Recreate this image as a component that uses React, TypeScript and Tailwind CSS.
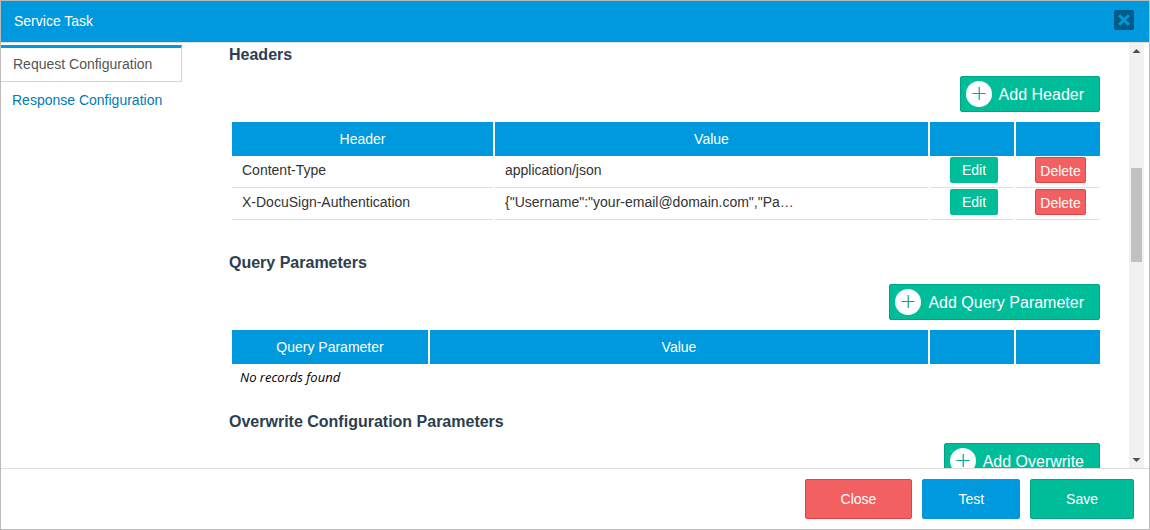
import type { ReactNode } from 'react';

const headers = [
  { name: 'Content-Type', value: 'application/json' },
  {
    name: 'X-DocuSign-Authentication',
    value: '{"Username":"your-email@domain.com","Pa…',
  },
];

function SectionTitle({ children }: { children: ReactNode }) {
  return (
    <h2 className="text-base leading-[22px] font-bold text-[#2c3e50]">{children}</h2>
  );
}

function AddButton({ label }: { label: string }) {
  return (
    <div className="mt-2.5 flex justify-end">
      <button
        type="button"
        className="flex h-9 items-center gap-[7px] rounded-xs border border-[#00a383] bg-[#00bd9a] pr-[15px] pl-[5px] text-base text-white"
      >
        <svg width="26" height="26" viewBox="0 0 26 26" aria-hidden="true">
          <circle cx="13" cy="13" r="13" fill="#fff" />
          <path d="M6.5 12.5h13M13.25 6v13" stroke="#00a88a" strokeWidth="1.2" />
        </svg>
        <span className="pt-0.5">{label}</span>
      </button>
    </div>
  );
}

function HeadCell({ children }: { children?: ReactNode }) {
  return (
    <th className="h-[34px] bg-[#0099de] p-0 text-center font-normal text-white">
      {children}
    </th>
  );
}

export default function App() {
  return (
    <div className="flex h-screen flex-col border border-[#bbb] bg-white font-['Liberation_Sans',Arial,sans-serif] text-sm text-[#333]">
      {/* Title bar */}
      <header className="flex h-[42px] shrink-0 items-center justify-between border-b border-[#dedede] bg-[#0099de] pr-[15px] pb-1 pl-[13px]">
        <h1 className="pt-0.5 text-white">Service Task</h1>
        <button
          type="button"
          aria-label="Close dialog"
          className="flex size-5 items-center justify-center rounded-xs bg-[#005c86]"
        >
          <svg width="12" height="12" viewBox="0 0 12 12" aria-hidden="true">
            <path d="M1.2 1.2l9.6 9.6M10.8 1.2l-9.6 9.6" stroke="#0099de" strokeWidth="2.9" />
          </svg>
        </button>
      </header>

      <div className="flex min-h-0 flex-1">
        {/* Tabs */}
        <nav className="w-[181px] shrink-0 pt-0.5">
          <a
            href="#request"
            className="flex h-[37px] items-center border-t-3 border-r border-b border-t-[#0099de] border-r-[#d5d5d5] border-b-[#d5d5d5] pb-0.5 pl-3 text-[#555]"
          >
            Request Configuration
          </a>
          <a href="#response" className="flex h-9 items-center pl-[11px] text-[#007bb3]">
            Response Configuration
          </a>
        </nav>

        {/* Scrolled content */}
        <main className="min-w-0 flex-1 overflow-hidden pt-px pr-[29px] pl-[47px]">
          <section className="mb-8">
            <SectionTitle>Headers</SectionTitle>
            <AddButton label="Add Header" />
            <div className="mt-2.5 -mr-0.5 ml-px">
              <table className="w-full table-fixed border-separate border-spacing-x-0.5 border-spacing-y-0">
                <colgroup>
                  <col className="w-[261px]" />
                  <col />
                  <col className="w-[84px]" />
                  <col className="w-[84px]" />
                </colgroup>
                <thead>
                  <tr>
                    <HeadCell>Header</HeadCell>
                    <HeadCell>Value</HeadCell>
                    <HeadCell />
                    <HeadCell />
                  </tr>
                </thead>
                <tbody>
                  {headers.map((header) => (
                    <tr key={header.name}>
                      <td className="h-8 border-b border-[#e0e0e0] px-2.5 pt-0 pb-1">
                        {header.name}
                      </td>
                      <td className="h-8 border-b border-[#e0e0e0] px-2.5 pt-0 pb-1">
                        {header.value}
                      </td>
                      <td className="h-8 border-b border-[#e0e0e0] pt-px pl-5 align-top">
                        <button
                          type="button"
                          className="block h-[26px] w-12 rounded-xs bg-[#00bd9a] text-white"
                        >
                          Edit
                        </button>
                      </td>
                      <td className="h-8 border-b border-[#e0e0e0] pt-px pl-[19px] align-top">
                        <button
                          type="button"
                          className="block h-[26px] w-[51px] rounded-xs border border-[#ee3e3e] bg-[#f36062] pt-0.5 text-white"
                        >
                          Delete
                        </button>
                      </td>
                    </tr>
                  ))}
                </tbody>
              </table>
            </div>
          </section>

          <section className="mb-5">
            <SectionTitle>Query Parameters</SectionTitle>
            <AddButton label="Add Query Parameter" />
            <div className="mt-2.5 -mr-0.5 ml-px">
              <table className="w-full table-fixed border-separate border-spacing-x-0.5 border-spacing-y-0">
                <colgroup>
                  <col className="w-[196px]" />
                  <col />
                  <col className="w-[84px]" />
                  <col className="w-[84px]" />
                </colgroup>
                <thead>
                  <tr>
                    <HeadCell>Query Parameter</HeadCell>
                    <HeadCell>Value</HeadCell>
                    <HeadCell />
                    <HeadCell />
                  </tr>
                </thead>
                <tbody>
                  <tr>
                    <td
                      colSpan={4}
                      className="h-[27px] pt-0 pb-0.5 pl-2 font-['Open_Sans',sans-serif] text-[13px] leading-5 text-black italic"
                    >
                      No records found
                    </td>
                  </tr>
                </tbody>
              </table>
            </div>
          </section>

          <section>
            <SectionTitle>Overwrite Configuration Parameters</SectionTitle>
            <AddButton label="Add Overwrite" />
          </section>
        </main>

        {/* Scrollbar */}
        <div className="mr-[5px] flex w-[15px] shrink-0 flex-col items-center bg-[#f1f1f1]">
          <svg width="15" height="16" viewBox="0 0 15 16" className="shrink-0" aria-hidden="true">
            <path d="M3.5 10L7.5 6L11.5 10z" fill="#505050" />
          </svg>
          <div className="flex w-full flex-1 flex-col items-center">
            <div className="basis-[109px]" />
            <div className="h-[94px] w-[11px] bg-[#c1c1c1]" />
          </div>
          <svg width="15" height="16" viewBox="0 0 15 16" className="shrink-0" aria-hidden="true">
            <path d="M3.5 6L7.5 10L11.5 6z" fill="#505050" />
          </svg>
        </div>
      </div>

      {/* Actions */}
      <footer className="flex shrink-0 justify-end gap-2.5 border-t border-[#dedede] py-2.5 pr-[15px]">
        <button
          type="button"
          className="h-10 rounded-xs border border-[#ee3e3e] bg-[#f36062] px-[35px] text-white"
        >
          Close
        </button>
        <button
          type="button"
          className="h-10 rounded-xs border border-[#0099de] bg-[#0099de] px-[35px] text-white"
        >
          Test
        </button>
        <button
          type="button"
          className="h-10 rounded-xs border border-[#00a383] bg-[#00bd9a] px-[35px] text-white"
        >
          Save
        </button>
      </footer>
    </div>
  );
}
